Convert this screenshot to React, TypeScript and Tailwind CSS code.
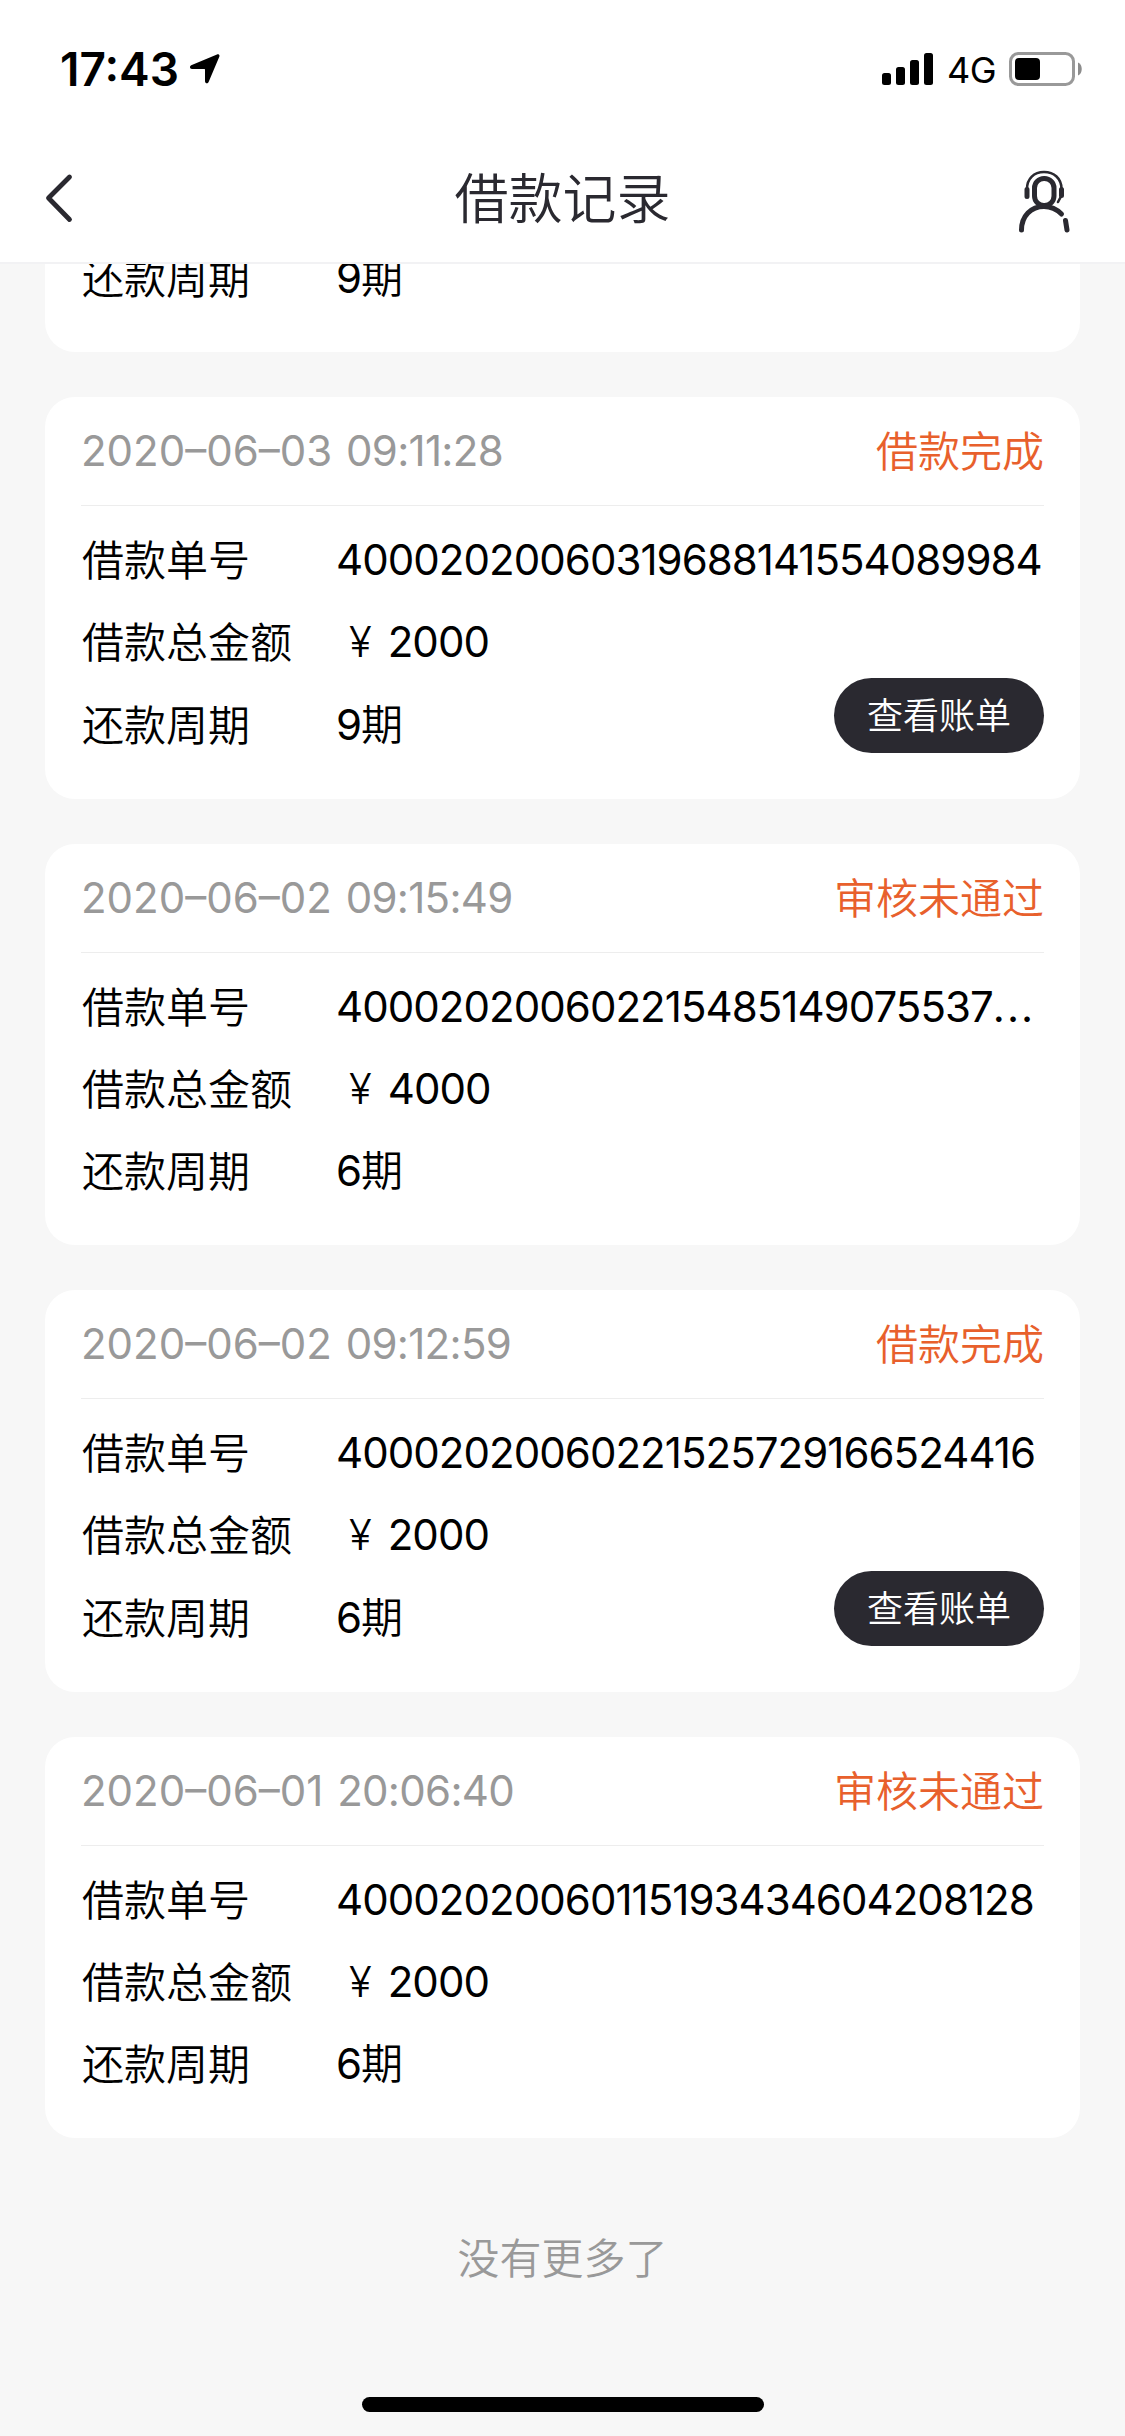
import React from 'react';

interface LoanRecord {
  date: string;
  time: string;
  status: string;
  orderNo: string;
  truncated?: boolean;
  amount: string;
  period: string;
  hasBill: boolean;
}

const records: LoanRecord[] = [
  { date: '2020–06–03', time: '09:11:28', status: '借款完成', orderNo: '40002020060319688141554089984', amount: '2000', period: '9期', hasBill: true },
  { date: '2020–06–02', time: '09:15:49', status: '审核未通过', orderNo: '400020200602215485149075537', truncated: true, amount: '4000', period: '6期', hasBill: false },
  { date: '2020–06–02', time: '09:12:59', status: '借款完成', orderNo: '40002020060221525729166524416', amount: '2000', period: '6期', hasBill: true },
  { date: '2020–06–01', time: '20:06:40', status: '审核未通过', orderNo: '40002020060115193434604208128', amount: '2000', period: '6期', hasBill: false },
];

const StatusBar: React.FC = () => (
  <div className="flex h-[138px] items-center justify-between pl-[60px] pr-[43px]">
    <div className="flex items-center gap-[11px]">
      <span className="text-[46px] leading-none font-semibold text-black">17:43</span>
      <svg className="h-[30px] w-[30px]" viewBox="0 0 30 30" fill="#000">
        <path d="M1.2 11.2 27 .4c1.700-.6 3 .7 2.300 2.300L18.600 28c-.8 1.900-3.600 1.500-3.600-.8V15.500c0-.4-.2-.6-.6-.6H2c-2.300 0-2.700-2.900-.8-3.700Z" />
      </svg>
    </div>
    <div className="flex items-center">
      <svg className="h-[32px] w-[51px]" viewBox="0 0 51 32" fill="#000">
        <rect x="0" y="20" width="9" height="12" rx="2.500" />
        <rect x="14" y="14" width="9" height="18" rx="2.500" />
        <rect x="28" y="7" width="9" height="25" rx="2.500" />
        <rect x="42" y="0" width="9" height="32" rx="2.500" />
      </svg>
      <span className="ml-[14px] w-[48px] pt-[2px] text-[36px] leading-none font-normal tracking-[-0.5px] text-black">4G</span>
      <svg className="ml-[14px] h-[34px] w-[73px]" viewBox="0 0 73 34">
        <rect x="1.500" y="1.500" width="63" height="31" rx="8" fill="none" stroke="#999" strokeWidth="3" />
        <rect x="6" y="6" width="25" height="22" rx="4" fill="#000" />
        <path d="M69 10.500c5 2 5 11 0 13Z" fill="#8c8c8c" />
      </svg>
    </div>
  </div>
);

const NavBar: React.FC = () => (
  <div className="flex h-[126px] items-center justify-between border-b-2 border-[#f2f2f4] pr-[55px] pl-[44px]">
    <svg className="mb-[4px] h-[50px] w-[52px]" viewBox="0 0 52 50" fill="none" stroke="#2a2930" strokeWidth="4.800" strokeLinecap="round" strokeLinejoin="round">
      <path d="M25.500 4 4.500 25l21 21.500" />
    </svg>
    <h1 className="pl-[11px] text-[54px] leading-none text-[#2a2930]">借款记录</h1>
    <svg className="mt-[2px] h-[64px] w-[52px]" viewBox="0 0 52 64" fill="none" stroke="#2a2930" strokeLinecap="round">
      <path d="M9 20C9 9.500 16 3 26 3s17.500 6.500 17.500 17" strokeWidth="2.600" />
      <path d="M43.500 26.500 40 33" strokeWidth="2.600" />
      <path d="M9 20.500v7M43.500 20.500v6" strokeWidth="5" />
      <rect x="16.500" y="9.500" width="19.500" height="27" rx="9.500" strokeWidth="5" />
      <path d="M3.500 61c0-14 9.500-23.500 22.500-23.500 7 0 12.500 2.500 17.500 7.500" strokeWidth="5" />
      <path d="M47.500 51.500 49 61" strokeWidth="5" />
    </svg>
  </div>
);

const Row: React.FC<{ label: string; children: React.ReactNode }> = ({ label, children }) => (
  <div className="flex h-[82.3px] items-center leading-[60px]">
    <span className="w-[255px] shrink-0 pt-[2px] pl-px">{label}</span>
    <span className="whitespace-nowrap">{children}</span>
  </div>
);

const Period: React.FC<{ value: string }> = ({ value }) => (
  <>
    <span className="font-normal tracking-[-0.95px]">{value.slice(0, -1)}</span>
    {value.slice(-1)}
  </>
);

const RecordCard: React.FC<{ record: LoanRecord }> = ({ record }) => (
  <section className="h-[401.5px] shrink-0 rounded-[30px] bg-white px-[36px]">
    <div className="flex h-[109px] items-center justify-between border-b border-[#ededed] leading-[60px]">
      <span className="font-normal text-[#999]">
        {record.date} <span className="ml-[2px] tracking-[-0.7px]">{record.time}</span>
      </span>
      <span className="pt-[2px] text-[#e8602c]">{record.status}</span>
    </div>
    <div className="relative pt-[13px] text-black">
      <Row label="借款单号">
        <span className="font-normal tracking-[-0.95px]">{record.orderNo}</span>
        {record.truncated && <span className="font-normal tracking-[2px]">...</span>}
      </Row>
      <Row label="借款总金额">
        <span className="mr-[16px] ml-[13px]">¥</span>
        <span className="font-normal tracking-[-0.95px]">{record.amount}</span>
      </Row>
      <Row label="还款周期">
        <Period value={record.period} />
      </Row>
      {record.hasBill && (
        <button className="absolute top-[172px] right-0 h-[75px] w-[210px] rounded-full bg-[#2a2930] text-[36px] text-white">
          查看账单
        </button>
      )}
    </div>
  </section>
);

export default function App() {
  return (
    <div className="flex h-[2436px] w-[1125px] flex-col overflow-hidden bg-[#f7f7f7] font-['Inter','Noto_Sans_CJK_SC',sans-serif] text-[42px] font-[350]">
      <header className="shrink-0 bg-white">
        <StatusBar />
        <NavBar />
      </header>

      <main className="flex flex-1 flex-col gap-[45px] px-[45px]">
        {/* tail of the record scrolled under the nav bar */}
        <section className="h-[88px] shrink-0 overflow-hidden rounded-b-[30px] bg-white px-[36px] text-black">
          <div className="-mt-[27px]">
            <Row label="还款周期">
              <Period value="9期" />
            </Row>
          </div>
        </section>
        {records.map((record) => (
          <RecordCard key={record.date + record.time} record={record} />
        ))}
        <p className="mt-[45px] pt-px text-center leading-[60px] text-[#999]">没有更多了</p>
      </main>

      <div className="mb-[24px] ml-[362px] h-[15px] w-[402px] shrink-0 rounded-full bg-black" />
    </div>
  );
}
